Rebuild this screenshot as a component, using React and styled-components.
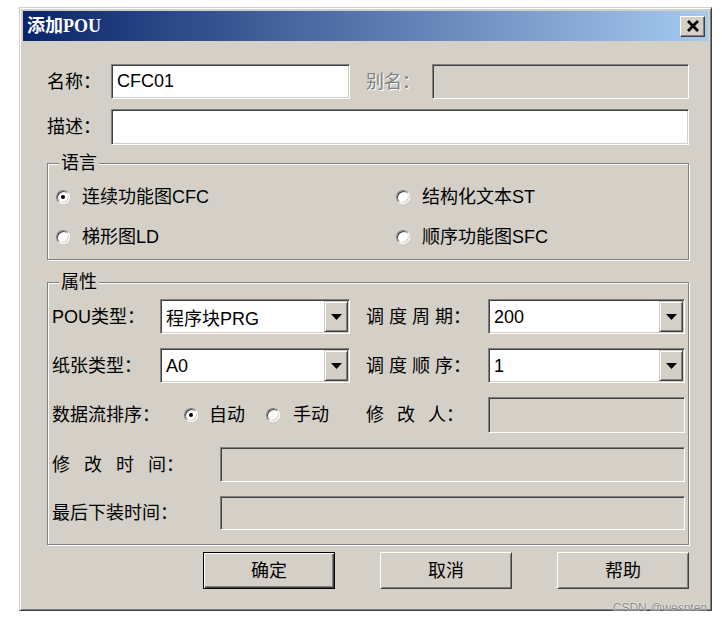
import React from "react";
import styled, { createGlobalStyle } from "styled-components";

const GlobalStyle = createGlobalStyle`
  body {
    margin: 0;
    background: #fff;
    font-family: "Liberation Sans", "Noto Sans CJK SC", sans-serif;
    font-size: 18px;
    color: #000;
  }
  * { box-sizing: border-box; }
`;

const face = "#d4d0c8";

const Window = styled.div`
  position: relative;
  margin: 7px 0 0 19px;
  width: 693px;
  height: 604px;
  background: ${face};
  border: 1px solid;
  border-color: ${face} #404040 #404040 ${face};
  box-shadow: inset 1px 1px #fff, inset -1px -1px #808080;
  padding: 3px;
  display: flex;
  flex-direction: column;
`;

const TitleBar = styled.div`
  height: 30px;
  flex: none;
  display: flex;
  align-items: center;
  justify-content: space-between;
  padding: 0 3px 0 4px;
  background: linear-gradient(to right, #0a246a, #a6caf0);
`;

const Title = styled.span`
  color: #fff;
  font-family: "Liberation Serif", "Noto Sans CJK SC", serif;
  font-weight: 700;
  font-size: 18px;
  line-height: 22px;
`;

const CloseButton = styled.div`
  width: 25px;
  height: 21px;
  background: ${face};
  border: 1px solid;
  border-color: #fff #404040 #404040 #fff;
  box-shadow: inset -1px -1px #808080;
  display: flex;
  align-items: center;
  justify-content: center;
`;

const Body = styled.div`
  flex: 1;
  display: flex;
  flex-direction: column;
  padding: 23px 19px 18px 24px;
`;

const Row = styled.div`
  display: flex;
  align-items: center;
  height: ${(p) => p.$h || 35}px;
  margin-top: ${(p) => p.$mt || 0}px;
`;

const Label = styled.span`
  flex: none;
  width: ${(p) => p.$w}px;
  margin-left: ${(p) => p.$ml || 0}px;
  white-space: pre;
  word-spacing: ${(p) => p.$ws || 0}px;
  line-height: 22px;
  color: ${(p) => (p.$disabled ? "#808080" : "#000")};
  text-shadow: ${(p) => (p.$disabled ? "1px 1px 0 #fff" : "none")};
`;

const Field = styled.input`
  display: block;
  width: ${(p) => (p.$w ? `${p.$w}px` : "auto")};
  flex: ${(p) => (p.$w ? "none" : "1")};
  min-width: 0;
  height: 100%;
  margin: 0;
  padding: 0 5px;
  font: inherit;
  color: #000;
  outline: none;
  background: ${(p) => (p.disabled ? face : "#fff")};
  border: 1px solid;
  border-color: #808080 #fff #fff #808080;
  box-shadow: inset 1px 1px #404040, inset -1px -1px ${face};
`;

const ComboBox = styled.div`
  display: flex;
  width: ${(p) => (p.$w ? `${p.$w}px` : "auto")};
  flex: ${(p) => (p.$w ? "none" : "1")};
  height: 100%;
  padding: 1px;
  background: #fff;
  border: 1px solid;
  border-color: #808080 #fff #fff #808080;
  box-shadow: inset 1px 1px #404040, inset -1px -1px ${face};
`;

const ComboText = styled.span`
  flex: 1;
  padding: 1px 0 0 4px;
  display: flex;
  align-items: center;
`;

const ArrowButton = styled.div`
  width: 24px;
  flex: none;
  background: ${face};
  border: 1px solid;
  border-color: ${face} #404040 #404040 ${face};
  box-shadow: inset 1px 1px #fff, inset -1px -1px #808080;
  display: flex;
  align-items: center;
  justify-content: center;
`;

const Group = styled.div`
  position: relative;
  margin-top: ${(p) => p.$mt}px;
  border: 1px solid #808080;
  box-shadow: inset 1px 1px #fff, 1px 1px #fff;
  padding: ${(p) => p.$pad};
`;

const Caption = styled.span`
  position: absolute;
  top: -12px;
  left: 11px;
  padding: 0 2px;
  background: ${face};
  line-height: 22px;
`;

const LangGrid = styled.div`
  display: grid;
  grid-template-columns: 340px 1fr;
  grid-auto-rows: 28px;
  row-gap: 12px;
`;

const Option = styled.label`
  display: flex;
  align-items: center;
  gap: ${(p) => p.$gap || 12}px;
  margin-left: ${(p) => p.$ml || 0}px;
  line-height: 22px;
  flex: none;
`;

const RadioCircle = styled.span`
  width: 14px;
  height: 14px;
  flex: none;
  border-radius: 50%;
  background: #fff;
  border: 1px solid;
  border-color: #808080 #fff #fff #808080;
  box-shadow: inset 1px 1px #404040, inset -1px -1px ${face};
  display: flex;
  align-items: center;
  justify-content: center;
  &::after {
    content: "";
    display: ${(p) => (p.$checked ? "block" : "none")};
    width: 4px;
    height: 4px;
    border-radius: 50%;
    background: #000;
  }
`;

const PropRows = styled.div`
  display: flex;
  flex-direction: column;
  gap: 14px;
`;

const LeftCell = styled.div`
  display: flex;
  align-items: center;
  width: 298px;
  flex: none;
`;

const ButtonRow = styled.div`
  display: flex;
  justify-content: flex-end;
  gap: 45px;
  margin-top: 7px;
`;

const Button = styled.div`
  width: 132px;
  height: 37px;
  display: flex;
  align-items: center;
  justify-content: center;
  background: ${face};
  border: 1px solid;
  border-color: ${(p) =>
    p.$default ? "#000" : "#fff #404040 #404040 #fff"};
  box-shadow: ${(p) =>
    p.$default
      ? "inset 1px 1px #fff, inset -1px -1px #404040, inset -2px -2px #808080"
      : `inset 1px 1px ${face}, inset -1px -1px #808080`};
  line-height: 22px;
`;

const Watermark = styled.span`
  position: absolute;
  right: 4px;
  bottom: -5px;
  font-size: 12px;
  line-height: 14px;
  color: #8c8c8c;
  text-shadow: 0 0 2px #fff;
  font-family: "Liberation Sans", sans-serif;
`;

const Radio = ({ checked, children, gap, ml }) => (
  <Option $gap={gap} $ml={ml}>
    <RadioCircle $checked={checked} />
    {children}
  </Option>
);

const Combo = ({ w, value }) => (
  <ComboBox $w={w}>
    <ComboText>{value}</ComboText>
    <ArrowButton>
      <svg width="11" height="6" viewBox="0 0 11 6">
        <polygon points="0,0 11,0 5.5,6" fill="#000" />
      </svg>
    </ArrowButton>
  </ComboBox>
);

export default function App() {
  return (
    <>
      <GlobalStyle />
      <Window>
        <TitleBar>
          <Title>添加POU</Title>
          <CloseButton>
            <svg width="14" height="12" viewBox="0 0 14 12">
              <path d="M2 1 L12 11 M12 1 L2 11" stroke="#000" strokeWidth="2.8" />
            </svg>
          </CloseButton>
        </TitleBar>
        <Body>
          <Row>
            <Label $w={64}>名称：</Label>
            <Field $w={239} readOnly defaultValue="CFC01" />
            <Label $w={66} $ml={16} $disabled>别名：</Label>
            <Field disabled defaultValue="" />
          </Row>
          <Row $h={36} $mt={10}>
            <Label $w={64}>描述：</Label>
            <Field readOnly defaultValue="" />
          </Row>

          <Group $mt={18} $pad="19px 0 8px 8px">
            <Caption>语言</Caption>
            <LangGrid>
              <Radio checked>连续功能图CFC</Radio>
              <Radio>结构化文本ST</Radio>
              <Radio>梯形图LD</Radio>
              <Radio>顺序功能图SFC</Radio>
            </LangGrid>
          </Group>

          <Group $mt={22} $pad="16px 3px 14px 4px">
            <Caption>属性</Caption>
            <PropRows>
              <Row>
                <Label $w={108}>POU类型：</Label>
                <Combo w={190} value="程序块PRG" />
                <Label $w={122} $ml={16}>调 度 周 期：</Label>
                <Combo value="200" />
              </Row>
              <Row>
                <Label $w={108}>纸张类型：</Label>
                <Combo w={190} value="A0" />
                <Label $w={122} $ml={16}>调 度 顺 序：</Label>
                <Combo value="1" />
              </Row>
              <Row $h={36}>
                <LeftCell>
                  <Label $w={132}>数据流排序：</Label>
                  <Radio checked gap={11}>自动</Radio>
                  <Radio gap={13} ml={21}>手动</Radio>
                </LeftCell>
                <Label $w={122} $ml={16} $ws={8}>修 改 人：</Label>
                <Field disabled defaultValue="" />
              </Row>
              <Row>
                <Label $w={168} $ws={9}>修 改 时 间：</Label>
                <Field disabled defaultValue="" />
              </Row>
              <Row $h={34}>
                <Label $w={168}>最后下装时间：</Label>
                <Field disabled defaultValue="" />
              </Row>
            </PropRows>
          </Group>

          <ButtonRow>
            <Button $default>确定</Button>
            <Button>取消</Button>
            <Button>帮助</Button>
          </ButtonRow>
        </Body>
        <Watermark>CSDN @wespten</Watermark>
      </Window>
    </>
  );
}
